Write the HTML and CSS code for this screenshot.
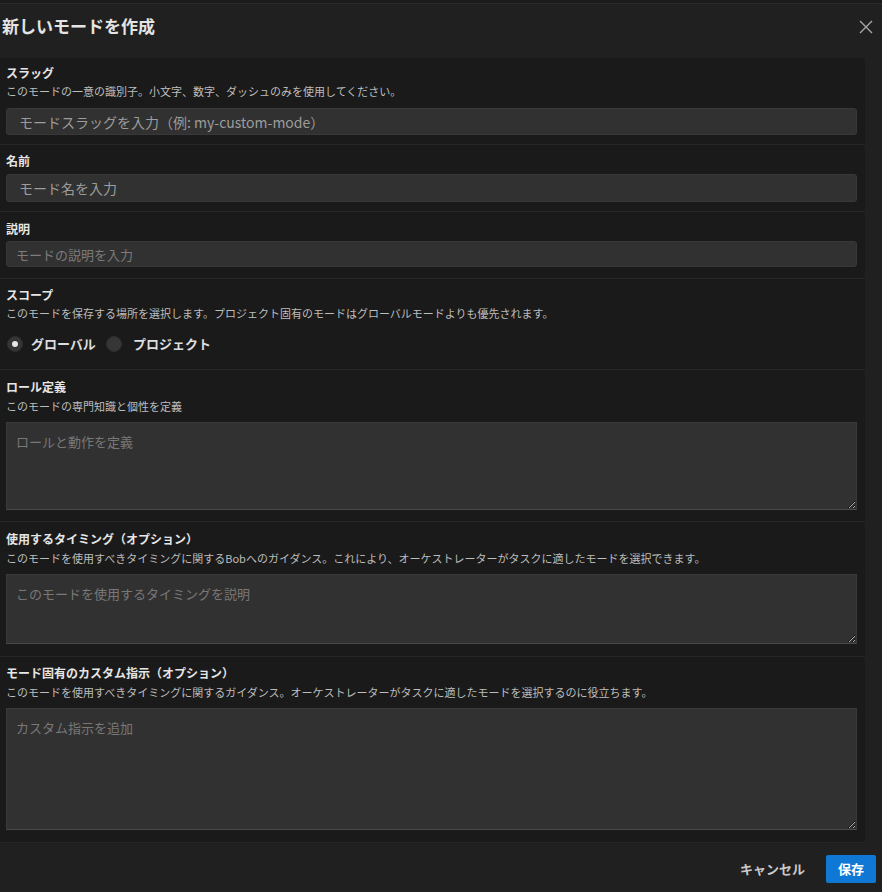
FILE: index.html
```html
<!DOCTYPE html>
<html lang="ja">
<head>
<meta charset="utf-8">
<title>新しいモードを作成</title>
<link rel="stylesheet" href="styles.css">
</head>
<body>
<div class="dialog">
  <div class="topbar"></div>
  <header class="header">
    <h1 class="title">新しいモードを作成</h1>
    <button class="close" aria-label="閉じる">
      <svg width="14" height="14" viewBox="0 0 14 14"><path d="M1 1L13 13M13 1L1 13" stroke="#a8a8a8" stroke-width="1.4" fill="none"/></svg>
    </button>
  </header>
  <main class="content">
    <section class="section s-slug">
      <div class="label">スラッグ</div>
      <div class="desc">このモードの一意の識別子。小文字、数字、ダッシュのみを使用してください。</div>
      <input class="input input-lg" type="text" placeholder="モードスラッグを入力（例: my-custom-mode）">
    </section>
    <section class="section s-name">
      <div class="label">名前</div>
      <input class="input input-lg input-name" type="text" placeholder="モード名を入力">
    </section>
    <section class="section s-desc">
      <div class="label">説明</div>
      <input class="input input-sm" type="text" placeholder="モードの説明を入力">
    </section>
    <section class="section s-scope">
      <div class="label">スコープ</div>
      <div class="desc">このモードを保存する場所を選択します。プロジェクト固有のモードはグローバルモードよりも優先されます。</div>
      <div class="radios">
        <label class="radio"><span class="dot checked"></span><span class="radio-text">グローバル</span></label>
        <label class="radio"><span class="dot"></span><span class="radio-text radio-text-2">プロジェクト</span></label>
      </div>
    </section>
    <section class="section s-role">
      <div class="label">ロール定義</div>
      <div class="desc desc-wide">このモードの専門知識と個性を定義</div>
      <textarea class="area area-role" placeholder="ロールと動作を定義"></textarea>
    </section>
    <section class="section s-when">
      <div class="label">使用するタイミング（オプション）</div>
      <div class="desc desc-wide">このモードを使用すべきタイミングに関するBobへのガイダンス。これにより、オーケストレーターがタスクに適したモードを選択できます。</div>
      <textarea class="area area-when" placeholder="このモードを使用するタイミングを説明"></textarea>
    </section>
    <section class="section s-custom">
      <div class="label">モード固有のカスタム指示（オプション）</div>
      <div class="desc desc-wide">このモードを使用すべきタイミングに関するガイダンス。オーケストレーターがタスクに適したモードを選択するのに役立ちます。</div>
      <textarea class="area area-custom" placeholder="カスタム指示を追加"></textarea>
    </section>
  </main>
  <footer class="footer">
    <button class="btn-cancel">キャンセル</button>
    <button class="btn-save">保存</button>
  </footer>
</div>
</body>
</html>
```
FILE: styles.css
```css
* { box-sizing: border-box; }
html, body { margin: 0; padding: 0; }
body {
  background: #202020;
  font-family: "Noto Sans CJK JP", "Noto Sans", "Liberation Sans", sans-serif;
  color: #e0e0e0;
  width: 882px;
  height: 892px;
  overflow: hidden;
}
.dialog { display: flex; flex-direction: column; height: 892px; }
.topbar { height: 4px; flex: none; background: #1b1b1b; border-bottom: 1px solid #2b2b2b; }
.header {
  height: 54px;
  flex: none;
  display: flex;
  align-items: center;
  justify-content: space-between;
  padding: 0 9px 10px 2px;
}
.title { margin: 0; font-size: 17px; font-weight: 700; color: #e4e4e4; line-height: 24px; }
.close { background: none; border: 0; padding: 0; width: 14px; height: 14px; display: flex; cursor: pointer; margin-top: 2px; }
.content { background: #1a1a1a; width: 865px; flex: none; display: flex; flex-direction: column; }
.section { padding: 7px 8px 9px 6px; border-bottom: 1px solid #262626; display: flex; flex-direction: column; flex: none; }
.label { font-size: 12px; font-weight: 700; line-height: 16px; color: #e6e6e6; }
.desc { font-size: 11px; line-height: 16px; color: #bdbdbd; margin-top: 2px; }
.desc-wide { margin-top: 3px; }
.input {
  background: #313131;
  border: 1px solid #383838;
  border-radius: 3px;
  color: #ddd;
  font-family: inherit;
  outline: none;
  width: 851px;
}
.input-lg { height: 28px; font-size: 14px; padding: 0 12px; margin-top: 9px; }
.input-lg::placeholder { color: #9c9c9c; }
.input-name { margin-top: 5px; height: 29px; }
.input-sm { height: 26px; font-size: 13px; padding: 0 9px; margin-top: 4px; }
.input-sm::placeholder { color: #7c7c7c; }
.s-slug { height: 87px; }
.s-name { height: 67px; padding-top: 8px; }
.s-desc { height: 67px; padding-top: 9px; }
.s-scope { height: 91px; padding-top: 8px; }
.s-role { height: 152px; padding-top: 9px; }
.s-when { height: 135px; padding-top: 9px; }
.s-custom { height: 186px; padding-top: 8px; }
.radios { display: flex; align-items: center; margin-top: 15px; margin-left: 1px; }
.radio { display: flex; align-items: center; margin-right: 10px; }
.dot {
  width: 16px; height: 16px; border-radius: 50%;
  background: #363636;
  border: 1px solid #2e2e2e;
  display: flex; align-items: center; justify-content: center;
}
.dot.checked::after { content: ""; width: 6px; height: 6px; border-radius: 50%; background: #e8e8e8; }
.radio-text { font-size: 13px; font-weight: 700; color: #dedede; margin-left: 8px; line-height: 16px; }
.radio-text-2 { margin-left: 11px; }
.area {
  background: #313131;
  border: 1px solid #3a3a3a;
  border-bottom-color: #4a4a4a;
  border-radius: 0;
  width: 851px;
  font-family: inherit;
  font-size: 13px;
  color: #ddd;
  padding: 9px 9px;
  outline: none;
  margin-top: 8px;
  resize: vertical;
}
.area::placeholder { color: #787878; }
.area-role { height: 88px; }
.area-when { height: 70px; margin-top: 8px; }
.area-custom { height: 122px; }
.footer {
  flex: 1;
  display: flex;
  justify-content: flex-end;
  align-items: center;
  padding: 2px 6px 0 0;
  background: #202020;
}
.btn-cancel {
  background: none; border: 0; font-family: inherit;
  font-size: 13px; font-weight: 700; color: #cacaca;
  padding: 0; margin-right: 21px; cursor: pointer;
}
.btn-save {
  background: #0e78d4; border: 0; border-radius: 2px;
  width: 50px; height: 28px;
  color: #fff; font-family: inherit; font-size: 13px; font-weight: 700;
  cursor: pointer;
}
```
